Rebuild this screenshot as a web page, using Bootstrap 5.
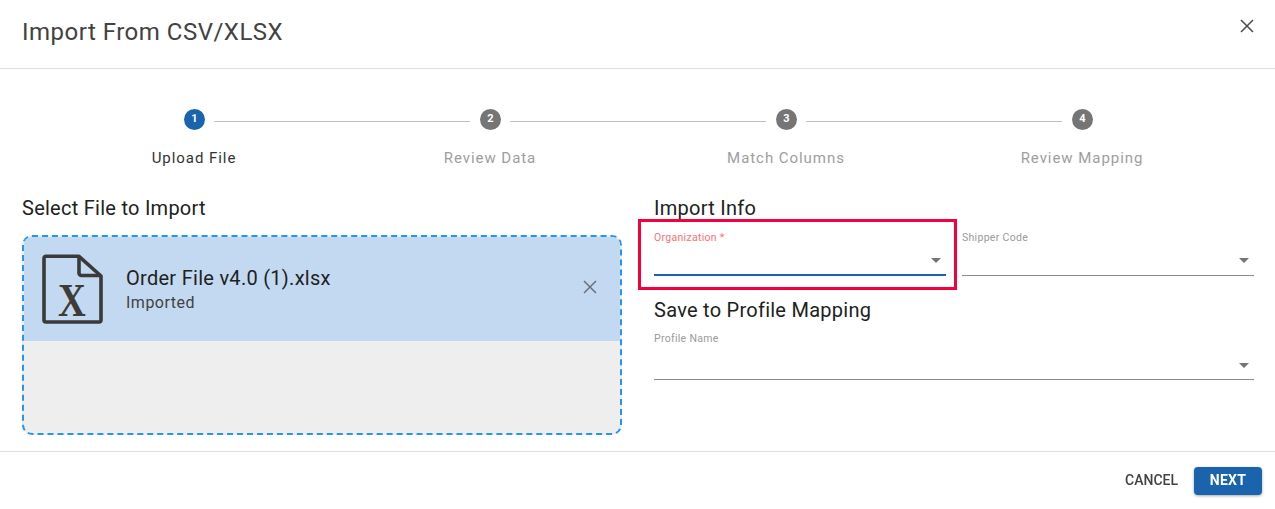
<!DOCTYPE html>
<html lang="en">
<head>
  <meta charset="UTF-8" />
  <title>Import From CSV/XLSX</title>
  <link rel="stylesheet" href="https://cdn.jsdelivr.net/npm/bootstrap@5.3.2/dist/css/bootstrap.min.css" />
  <style>
    html, body { height: 100%; overflow: hidden; }
    body { font-family: Roboto, "Liberation Sans", sans-serif; color: #212121; background: #fff; }
    .dlg-head { height: 69px; padding: 0 20px 0 22px; border-bottom: 1px solid #e0e0e0; }
    .dlg-title { font-size: 24px; font-weight: 400; letter-spacing: .5px; color: #424242; margin: 0; line-height: 28px; padding-bottom: 5px; }
    .icon-x { background: none; border: 0; padding: 0; line-height: 0; }
    .close-x { margin: 0 1px 16px 0; }
    .stepper { padding: 40px 45px 0 46px; }
    .step-top { gap: 9px; height: 23px; }
    .step-line { flex: 1; height: 1px; margin-top: 12px; background: #bdbdbd; }
    .step-line.off { background: transparent; }
    .step-dot { width: 21px; height: 21px; margin-left: 1px; border-radius: 50%; background: #757575; color: #fff; font-size: 11px; font-weight: 700; }
    .step-dot.on { background: #1a63ad; }
    .step-name { margin-top: 15px; padding-top: 1px; font-size: 15px; line-height: 20px; letter-spacing: .95px; color: #9e9e9e; text-align: center; }
    .step-name.on { color: #333; }
    .dlg-body { padding: 28px 21px 0 22px; }
    .dlg-cols { --bs-gutter-x: 32px; }
    .sec-title { font-size: 20px; font-weight: 400; letter-spacing: .26px; line-height: 24px; color: #212121; margin: 0; }
    .drop-zone { margin-top: 15px; height: 200px; border: 2px dashed #2196f3; border-radius: 10px; background: #eee; overflow: hidden; }
    .file-row { height: 104px; background: #c3d9f1; padding: 0 23px 0 18px; }
    .file-text { margin-left: 22px; }
    .file-name { font-size: 20px; line-height: 24px; letter-spacing: .28px; color: #212121; }
    .file-sub { font-size: 16px; line-height: 20px; letter-spacing: .5px; color: #424242; margin-top: 3px; }
    .rm-x { margin-bottom: 5px; }
    .field-row { margin-top: 12px; gap: 16px; }
    .sel-field { flex: 1; height: 44px; border-bottom: 1px solid #8a8a8a; }
    .sel-field label { display: block; font-size: 10.5px; line-height: 11px; letter-spacing: .3px; color: #9a9a9a; }
    .sel-arrow { width: 0; height: 0; border-left: 5px solid transparent; border-right: 5px solid transparent; border-top: 5px solid #757575; margin-top: 15px; margin-right: 5px; }
    .org-wrap { flex: 1; position: relative; display: flex; }
    .org-wrap .sel-field { border-bottom: 2px solid #1a63ad; }
    .org-wrap label { color: #ff7074; }
    .red-box { position: absolute; left: -16px; right: -11px; top: -13px; bottom: -14px; border: 3px solid #f5003c; pointer-events: none; }
    .sec-two { margin-top: 22px; }
    .sel-tall { height: 47px; margin-top: 11px; }
    .sel-tall .sel-arrow { margin-top: 19px; }
    .dlg-foot { position: fixed; left: 0; right: 0; bottom: 0; height: 58px; border-top: 1px solid #e0e0e0; padding: 0 13px 0 0; }
    .btn-plain { font-size: 14px; font-weight: 500; letter-spacing: 0; color: #424242; background: none; border: 0; padding: 0; margin-right: 16px; }
    .btn-next { width: 68px; height: 28px; padding: 0; font-size: 14px; font-weight: 700; letter-spacing: .3px; color: #fff; background: #1a63ad; border: 0; border-radius: 4px; box-shadow: 0 1px 3px rgba(0,0,0,.35); }
  </style>
</head>
<body>
  <div class="dlg-head d-flex align-items-center justify-content-between">
    <h5 class="dlg-title">Import From CSV/XLSX</h5>
    <button class="icon-x close-x" type="button" aria-label="Close">
      <svg width="14" height="14" viewBox="0 0 14 14"><path d="M1 1 13 13M13 1 1 13" stroke="#4a4a4a" stroke-width="1.5" fill="none"/></svg>
    </button>
  </div>

  <div class="stepper row g-0">
    <div class="col-3">
      <div class="step-top d-flex align-items-start"><span class="step-line off"></span><span class="step-dot on d-flex align-items-center justify-content-center">1</span><span class="step-line"></span></div>
      <div class="step-name on">Upload File</div>
    </div>
    <div class="col-3">
      <div class="step-top d-flex align-items-start"><span class="step-line"></span><span class="step-dot d-flex align-items-center justify-content-center">2</span><span class="step-line"></span></div>
      <div class="step-name">Review Data</div>
    </div>
    <div class="col-3">
      <div class="step-top d-flex align-items-start"><span class="step-line"></span><span class="step-dot d-flex align-items-center justify-content-center">3</span><span class="step-line"></span></div>
      <div class="step-name">Match Columns</div>
    </div>
    <div class="col-3">
      <div class="step-top d-flex align-items-start"><span class="step-line"></span><span class="step-dot d-flex align-items-center justify-content-center">4</span><span class="step-line off"></span></div>
      <div class="step-name">Review Mapping</div>
    </div>
  </div>

  <div class="dlg-body">
    <div class="row dlg-cols">
      <div class="col-6">
        <h6 class="sec-title">Select File to Import</h6>
        <div class="drop-zone">
          <div class="file-row d-flex align-items-center">
            <svg width="62" height="72" viewBox="0 0 62 72" class="flex-shrink-0">
              <path d="M4 3.3H37L59 23V67a2 2 0 0 1-2 2H4a2 2 0 0 1-2-2V5.3a2 2 0 0 1 2-2Z" fill="none" stroke="#3a3a3a" stroke-width="3.6" stroke-linejoin="round"/>
              <path d="M37 3.3V20a2.5 2.5 0 0 0 2.5 2.5H59" fill="none" stroke="#3a3a3a" stroke-width="3.6"/>
              <text transform="translate(30 63) scale(.82 1)" text-anchor="middle" font-family="Liberation Serif" font-weight="700" font-size="47" fill="#3f3b38">X</text>
            </svg>
            <div class="file-text flex-grow-1">
              <div class="file-name">Order File v4.0 (1).xlsx</div>
              <div class="file-sub">Imported</div>
            </div>
            <button class="icon-x rm-x" type="button" aria-label="Remove">
              <svg width="14" height="14" viewBox="0 0 14 14"><path d="M1 1 13 13M13 1 1 13" stroke="#6b7078" stroke-width="1.5" fill="none"/></svg>
            </button>
          </div>
        </div>
      </div>
      <div class="col-6">
        <h6 class="sec-title">Import Info</h6>
        <div class="field-row d-flex">
          <div class="org-wrap">
            <div class="sel-field">
              <label>Organization *</label>
              <div class="d-flex justify-content-end"><span class="sel-arrow"></span></div>
            </div>
            <div class="red-box"></div>
          </div>
          <div class="sel-field">
            <label>Shipper Code</label>
            <div class="d-flex justify-content-end"><span class="sel-arrow"></span></div>
          </div>
        </div>
        <h6 class="sec-title sec-two">Save to Profile Mapping</h6>
        <div class="sel-field sel-tall">
          <label>Profile Name</label>
          <div class="d-flex justify-content-end"><span class="sel-arrow"></span></div>
        </div>
      </div>
    </div>
  </div>

  <div class="dlg-foot d-flex align-items-center justify-content-end">
    <button class="btn-plain" type="button">CANCEL</button>
    <button class="btn btn-next" type="button">NEXT</button>
  </div>
</body>
</html>
